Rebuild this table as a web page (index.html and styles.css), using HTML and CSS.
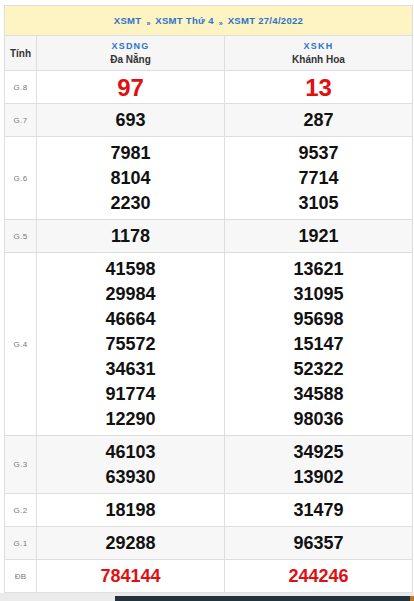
FILE: index.html
```html
<!DOCTYPE html>
<html lang="vi">
<head>
<meta charset="utf-8">
<title>XSMT 27/4/2022</title>
<link rel="stylesheet" href="styles.css">
</head>
<body>
<div class="page">
  <table class="kq">
    <colgroup><col class="c-lbl"><col class="c-prov"><col class="c-prov"></colgroup>
    <thead>
      <tr class="crumb">
        <th colspan="3"><a>XSMT</a><span class="sep">»</span><a>XSMT Thứ 4</a><span class="sep">»</span><a>XSMT 27/4/2022</a></th>
      </tr>
      <tr class="prov">
        <th class="lbl-tinh">Tính</th>
        <th><a class="code">XSDNG</a><div class="name">Đa Nẵng</div></th>
        <th><a class="code">XSKH</a><div class="name">Khánh Hoa</div></th>
      </tr>
    </thead>
    <tbody>
      <tr><td class="lbl">G.8</td><td class="num big red"><div>97</div></td><td class="num big red"><div>13</div></td></tr>
      <tr class="alt"><td class="lbl">G.7</td><td class="num"><div>693</div></td><td class="num"><div>287</div></td></tr>
      <tr><td class="lbl">G.6</td><td class="num"><div>7981</div><div>8104</div><div>2230</div></td><td class="num"><div>9537</div><div>7714</div><div>3105</div></td></tr>
      <tr class="alt"><td class="lbl">G.5</td><td class="num"><div>1178</div></td><td class="num"><div>1921</div></td></tr>
      <tr><td class="lbl">G.4</td><td class="num"><div>41598</div><div>29984</div><div>46664</div><div>75572</div><div>34631</div><div>91774</div><div>12290</div></td><td class="num"><div>13621</div><div>31095</div><div>95698</div><div>15147</div><div>52322</div><div>34588</div><div>98036</div></td></tr>
      <tr class="alt"><td class="lbl">G.3</td><td class="num"><div>46103</div><div>63930</div></td><td class="num"><div>34925</div><div>13902</div></td></tr>
      <tr><td class="lbl">G.2</td><td class="num"><div>18198</div></td><td class="num"><div>31479</div></td></tr>
      <tr class="alt"><td class="lbl">G.1</td><td class="num"><div>29288</div></td><td class="num"><div>96357</div></td></tr>
      <tr><td class="lbl">ĐB</td><td class="num red"><div>784144</div></td><td class="num red"><div>244246</div></td></tr>
    </tbody>
  </table>
  <div class="footer-strip"><div class="dark-bar"></div><div class="orange"></div></div>
</div>
</body>
</html>
```
FILE: styles.css
```css
html, body {
  margin: 0;
  padding: 0;
  background: #ffffff;
}
body {
  font-family: "Liberation Sans", Arial, sans-serif;
  color: #222;
}
.page {
  width: 414px;
  height: 601px;
  overflow: hidden;
  padding-top: 5px;
  box-sizing: border-box;
}
.kq {
  margin-left: 4px;
  width: 409px;
  border-collapse: collapse;
  table-layout: fixed;
}
.c-lbl { width: 32px; }
.kq th, .kq td {
  border: 1px solid #dedede;
  padding: 0;
  text-align: center;
  vertical-align: middle;
}
.crumb th {
  background: #fdf3c3;
  height: 29px;
  font-size: 9.5px;
  font-weight: bold;
  color: #2c72c9;
  letter-spacing: 0.3px;
}
.crumb a { color: #2c72c9; }
.crumb .sep {
  display: inline-block;
  margin: 0 5px;
  font-size: 7px;
  color: #2c72c9;
  position: relative;
  top: 2px;
  letter-spacing: 0;
}
.prov th {
  background: #f6f6f6;
  height: 34px;
  font-weight: normal;
}
.prov .lbl-tinh {
  font-size: 10px;
  color: #333;
  font-weight: bold;
}
.prov .code {
  display: block;
  font-size: 9px;
  font-weight: bold;
  color: #2c72c9;
  letter-spacing: 1.2px;
  line-height: 13px;
}
.prov .name {
  font-size: 10px;
  color: #333;
  font-weight: bold;
  line-height: 14px;
}
.lbl {
  font-size: 8px;
  color: #777;
  letter-spacing: 0.3px;
}
tbody tr.alt td { background: #f7f7f7; }
.num {
  padding: 4px 0 3px !important;
  font-size: 18px;
  font-weight: bold;
  color: #111;
}
.num div {
  line-height: 25px;
  height: 25px;
}
.num.big { font-size: 24px; }
.num.red { color: #e01010; }
.footer-strip {
  height: 10px;
  background: #ebebeb;
  display: flex;
  padding-top: 3px;
  box-sizing: border-box;
}
.dark-bar {
  margin-left: 115px;
  width: 295px;
  background: #22333c;
}
.orange {
  width: 4px;
  background: #b8772f;
}
```
